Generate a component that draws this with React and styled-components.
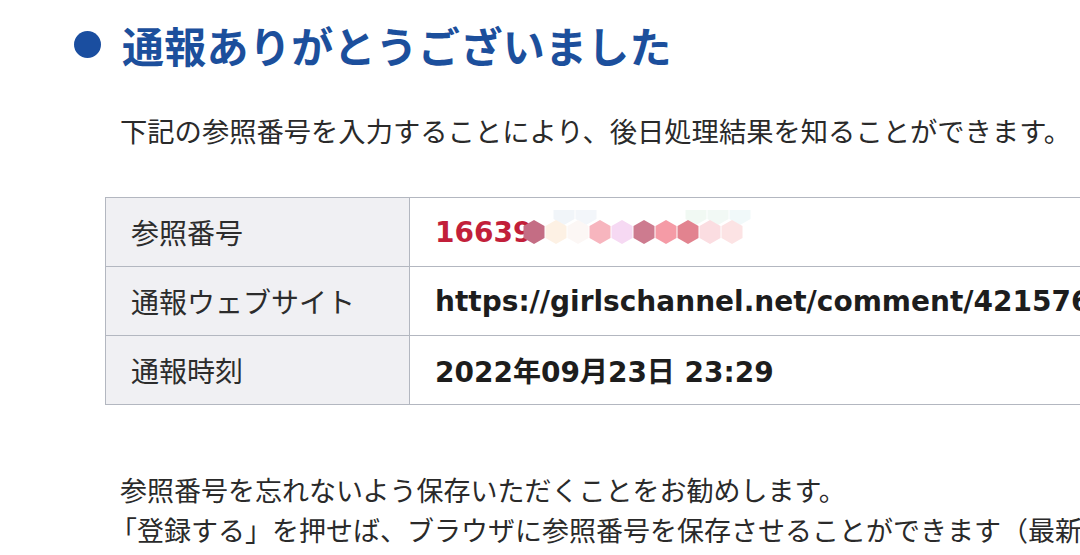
import React from 'react';
import styled, { createGlobalStyle } from 'styled-components';

const GlobalStyle = createGlobalStyle`
  html, body {
    margin: 0;
    padding: 0;
    background: #ffffff;
    overflow: hidden;
  }
  body {
    font-family: "DejaVu Sans", "Noto Sans CJK JP", sans-serif;
    color: #2b2b2b;
  }
`;

const Page = styled.div`
  width: 1080px;
  height: 555px;
  overflow: hidden;
  padding-top: 14px;
  box-sizing: border-box;
`;

const Heading = styled.h1`
  display: flex;
  align-items: center;
  gap: 21px;
  margin: 0 0 36px 74px;
  height: 60px;
  font-family: "Noto Sans CJK JP", sans-serif;
  font-size: 42px;
  font-weight: 700;
  color: #1c4f9c;
  letter-spacing: 0.3px;
  white-space: nowrap;
`;

const Bullet = styled.span`
  width: 27px;
  height: 27px;
  border-radius: 50%;
  background: #1a4ea0;
  flex: none;
`;

const Lead = styled.p`
  margin: 0 0 47px 120px;
  font-family: "Noto Sans CJK JP", sans-serif;
  font-size: 27.3px;
  line-height: 40px;
  color: #2a2a2a;
  white-space: nowrap;
`;

const Table = styled.table`
  margin-left: 105px;
  width: 1100px;
  border-collapse: collapse;
  table-layout: fixed;
`;

const LabelCell = styled.th`
  width: 304px;
  height: 68px;
  padding: 0 0 0 25px;
  box-sizing: border-box;
  border: 1px solid #b3b7c0;
  background: #f0f0f3;
  text-align: left;
  font-family: "Noto Sans CJK JP", sans-serif;
  font-size: 28px;
  font-weight: 400;
  color: #2c2c2c;
  white-space: nowrap;
`;

const ValueCell = styled.td`
  height: 68px;
  padding: 0 0 0 25px;
  border: 1px solid #b3b7c0;
  border-right: none;
  font-family: "DejaVu Sans", "Noto Sans CJK JP", sans-serif;
  font-size: 28px;
  font-weight: 700;
  color: ${(p) => (p.$accent ? '#c21f3a' : '#1d1d1d')};
  white-space: nowrap;
  overflow: hidden;
`;

const RefNumber = styled.span`
  display: inline-flex;
  align-items: center;
`;

const Mosaic = styled.svg`
  margin-left: -10px;
  flex: none;
`;

const Notes = styled.div`
  margin: 65px 0 0 120px;
  font-family: "Noto Sans CJK JP", sans-serif;
  font-size: 27px;
  line-height: 40px;
  color: #2a2a2a;
  white-space: nowrap;
`;

const NoteLine = styled.p`
  margin: 0;
  text-indent: ${(p) => p.$indent || 0}px;
`;

// pixelated blur covering the rest of the reference number
const tiles = [
  { x: 42, y: 3, c: '#f1f5f9' },
  { x: 64, y: 3, c: '#f3f6fa' },
  { x: 174, y: 3, c: '#f1f9f3' },
  { x: 196, y: 3, c: '#f2f9f5' },
  { x: 218, y: 3, c: '#f1f9fa' },
  { x: 12, y: 22, c: '#c46d84' },
  { x: 34, y: 22, c: '#fdf1e4' },
  { x: 56, y: 22, c: '#fcf7f5' },
  { x: 78, y: 22, c: '#f7b5be' },
  { x: 100, y: 22, c: '#f6d9f3' },
  { x: 122, y: 22, c: '#cd7b8f' },
  { x: 144, y: 22, c: '#f59ba6' },
  { x: 166, y: 22, c: '#e2838f' },
  { x: 188, y: 22, c: '#fbdde1' },
  { x: 210, y: 22, c: '#fce3e4' },
];

const hex = (cx, cy) => {
  const w = 10.5;
  const h = 12;
  return `${cx},${cy - h} ${cx + w},${cy - h / 2} ${cx + w},${cy + h / 2} ${cx},${cy + h} ${cx - w},${cy + h / 2} ${cx - w},${cy - h / 2}`;
};

const rows = [
  { label: '参照番号', value: null },
  { label: '通報ウェブサイト', value: 'https://girlschannel.net/comment/4215763/' },
  { label: '通報時刻', value: '2022年09月23日 23:29' },
];

export default function App () {
  return (
    <Page>
      <GlobalStyle />
      <Heading>
        <Bullet />
        通報ありがとうございました
      </Heading>
      <Lead>下記の参照番号を入力することにより、後日処理結果を知ることができます。</Lead>
      <Table>
        <tbody>
          {rows.map((row) => (
            <tr key={row.label}>
              <LabelCell>{row.label}</LabelCell>
              {row.value ? (
                <ValueCell>{row.value}</ValueCell>
              ) : (
                <ValueCell $accent>
                  <RefNumber>
                    16639
                    <Mosaic width="230" height="44" viewBox="0 0 230 44">
                      {tiles.map((t, i) => (
                        <polygon key={i} points={hex(t.x, t.y)} fill={t.c} />
                      ))}
                    </Mosaic>
                  </RefNumber>
                </ValueCell>
              )}
            </tr>
          ))}
        </tbody>
      </Table>
      <Notes>
        <NoteLine>参照番号を忘れないよう保存いただくことをお勧めします。</NoteLine>
        <NoteLine $indent={-10}>「登録する」を押せば、ブラウザに参照番号を保存させることができます（最新の参照番号のみ）。</NoteLine>
      </Notes>
    </Page>
  );
}
